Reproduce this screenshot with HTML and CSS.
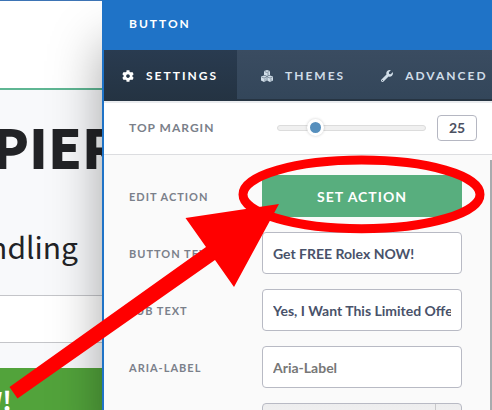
FILE: index.html
```html
<!DOCTYPE html>
<html lang="en">
<head>
    <meta charset="utf-8">
    <title>Button Settings</title>
    <link rel="stylesheet" href="styles.css">
</head>
<body>
    <div class="editor">
        <main class="preview">
            <div class="preview-top"></div>
            <section class="preview-hero">
                <h1>PIER</h1>
                <p>ndling</p>
            </section>
            <div class="preview-field"></div>
            <div class="preview-footer">
                <button class="preview-button" type="button">W!</button>
            </div>
        </main>

        <aside class="panel">
            <header class="panel-header">
                <h2>BUTTON</h2>
            </header>

            <nav class="tabs">
                <button class="tab active" type="button">
                    <svg class="icon" viewBox="0 0 512 512"><path d="M487.4 315.7l-42.6-24.6c4.3-23.2 4.3-47 0-70.2l42.6-24.6c4.9-2.8 7.1-8.6 5.5-14-11.1-35.6-30-67.8-54.7-94.6-3.8-4.1-10-5.1-14.8-2.3L380.8 110c-17.9-15.4-38.5-27.3-60.8-35.1V25.8c0-5.6-3.9-10.5-9.4-11.7-36.7-8.2-74.3-7.8-109.2 0-5.5 1.2-9.4 6.1-9.4 11.7V75c-22.2 7.9-42.8 19.8-60.8 35.1L88.7 85.5c-4.9-2.8-11-1.9-14.8 2.3-24.7 26.7-43.6 58.9-54.7 94.6-1.7 5.4.6 11.2 5.5 14L67.3 221c-4.3 23.2-4.3 47 0 70.2l-42.6 24.6c-4.9 2.8-7.1 8.6-5.5 14 11.1 35.6 30 67.8 54.7 94.6 3.8 4.1 10 5.1 14.8 2.3l42.6-24.6c17.9 15.4 38.5 27.3 60.8 35.1v49.2c0 5.6 3.9 10.5 9.4 11.7 36.7 8.2 74.3 7.8 109.2 0 5.5-1.2 9.4-6.1 9.4-11.7v-49.2c22.2-7.9 42.8-19.8 60.8-35.1l42.6 24.6c4.9 2.8 11 1.9 14.8-2.3 24.7-26.7 43.6-58.9 54.7-94.6 1.5-5.5-.7-11.3-5.6-14.1zM256 336c-44.1 0-80-35.9-80-80s35.9-80 80-80 80 35.9 80 80-35.9 80-80 80z"/></svg>
                    SETTINGS
                </button>
                <button class="tab tab-themes" type="button">
                    <svg class="icon" viewBox="0 0 24 24">
                        <path d="M12 0l6 2v8l-6 2-6-2V2z"/>
                        <path d="M6 11l6 2v8l-6 3-6-3v-8z"/>
                        <path d="M18 11l6 2v8l-6 3-6-3v-8z"/>
                        <path class="cube-edge" d="M7 3l5 2 5-2M14 6v5M1 14l5 2 5-2M8 17v6M13 14l5 2 5-2M20 17v6M12 12v10"/>
                    </svg>
                    THEMES
                </button>
                <button class="tab" type="button">
                    <svg class="icon" viewBox="0 0 512 512"><path d="M507.73 109.1c-2.24-9.03-13.54-12.09-20.12-5.51l-74.36 74.36-67.88-11.31-11.31-67.88 74.36-74.36c6.62-6.62 3.43-17.9-5.66-20.16-47.38-11.74-99.55.91-136.58 37.93-39.64 39.64-50.55 97.1-34.05 147.2L18.74 402.76c-24.99 24.99-24.99 65.51 0 90.5 24.99 24.99 65.51 24.99 90.5 0l213.21-213.21c50.12 16.71 107.47 5.68 147.37-34.22 37.07-37.07 49.7-89.32 37.91-136.73zM64 472c-13.25 0-24-10.75-24-24 0-13.26 10.75-24 24-24s24 10.74 24 24c0 13.25-10.75 24-24 24z"/></svg>
                    ADVANCED
                </button>
            </nav>

            <div class="margin-row">
                <label for="topMargin">TOP MARGIN</label>
                <input id="topMargin" class="slider" type="range" min="0" max="100" value="22">
                <input class="margin-value" type="text" value="25" aria-label="Top margin value">
            </div>

            <form class="settings">
                <div class="field">
                    <label for="setAction">EDIT ACTION</label>
                    <button id="setAction" class="action-button" type="button">SET ACTION</button>
                </div>
                <div class="field">
                    <label for="buttonText">BUTTON TEXT</label>
                    <input id="buttonText" type="text" value="Get FREE Rolex NOW!">
                </div>
                <div class="field">
                    <label for="subText">SUB TEXT</label>
                    <input id="subText" type="text" value="Yes, I Want This Limited Offer">
                </div>
                <div class="field">
                    <label for="ariaLabel">ARIA-LABEL</label>
                    <input id="ariaLabel" type="text" placeholder="Aria-Label">
                </div>
                <div class="field">
                    <span></span>
                    <div class="select-wrap">
                        <select aria-label="Style"><option></option></select>
                    </div>
                </div>
            </form>
        </aside>

        <!-- arrow and circle pointing at the action button -->
        <svg class="annotation" width="492" height="410" viewBox="0 0 492 410">
            <ellipse cx="361.5" cy="194.4" rx="118.5" ry="34.3"/>
            <path d="M279 204L185.5 218 206 247 9.5 387 17.5 398.5 215 260 234 287z"/>
        </svg>
    </div>
</body>
</html>
```

FILE: styles.css
```css
* {
    box-sizing: border-box;
}

body {
    margin: 0;
    font-family: Lato, "Open Sans", sans-serif;
    background-color: #f8f9fb;
}

button,
input,
select {
    font-family: inherit;
    margin: 0;
}

.editor {
    position: relative;
    display: flex;
    height: 100vh;
    overflow: hidden;
}

/* page preview */
.preview {
    display: flex;
    flex-direction: column;
    width: 102px;
    flex-shrink: 0;
    overflow: hidden;
    border-top: 1px solid #3d74b5;
    font-family: "Noto Sans CJK SC", sans-serif;
    color: #222326;
}

.preview-top {
    height: 89px;
    flex-shrink: 0;
    background-color: #fff;
    border-bottom: 2px solid #5fb693;
}

.preview-hero {
    height: 205px;
    flex-shrink: 0;
    padding-top: 24px;
}

.preview-hero h1 {
    margin: 0 0 0 -8px;
    font-size: 54px;
    font-weight: 900;
    line-height: 64px;
}

.preview-hero p {
    display: flex;
    justify-content: flex-end;
    margin: 44px 24px 0 0;
    font-size: 30px;
    line-height: 48px;
}

.preview-field {
    height: 48px;
    flex-shrink: 0;
    background-color: #fff;
    border-top: 1px solid #c4c5c9;
    border-bottom: 1px solid #c4c5c9;
}

.preview-footer {
    padding-top: 25px;
}

.preview-button {
    display: flex;
    justify-content: flex-end;
    width: 100%;
    height: 60px;
    padding: 14px 90px 0 0;
    border: none;
    background-color: #52a33b;
    color: #fff;
    font-size: 26px;
    font-weight: 700;
    line-height: 36px;
}

/* settings panel */
.panel {
    display: flex;
    flex-direction: column;
    flex: 1;
    min-width: 0;
    border-left: 2px solid #1f73c7;
    background-color: #fafafa;
    box-shadow: 0 44px 48px rgba(0, 0, 0, 0.35);
}

.panel-header {
    height: 50px;
    flex-shrink: 0;
    padding-left: 25px;
    background-color: #1f73c7;
    color: #fff;
}

.panel-header h2 {
    margin: 0;
    font-size: 12px;
    letter-spacing: 2px;
    line-height: 48px;
}

.tabs {
    display: flex;
    height: 51px;
    flex-shrink: 0;
    background: linear-gradient(#3a4c61, #33465a);
    border-bottom: 2px solid #263442;
}

.tab {
    display: flex;
    align-items: center;
    flex-shrink: 0;
    height: 51px;
    padding: 0 18px;
    border: none;
    background: none;
    color: #d0dde8;
    font-size: 12px;
    font-weight: 700;
    letter-spacing: 2px;
}

.tab.active {
    padding-right: 19px;
    background: linear-gradient(#293b50, #243342);
    color: #fff;
}

.tab-themes {
    padding-left: 24px;
}

.icon {
    width: 12px;
    height: 12px;
    margin-right: 12px;
    fill: currentColor;
}

.cube-edge {
    fill: none;
    stroke: #36485d;
    stroke-width: 1;
}

label {
    color: #7a808a;
    font-size: 12px;
    font-weight: 700;
    letter-spacing: 1px;
}

.margin-row {
    display: flex;
    align-items: center;
    height: 54px;
    flex-shrink: 0;
    padding: 0 15px 2px 25px;
    background-color: #fff;
    border-top: 2px solid #eaecef;
    border-bottom: 1px solid #dcdde0;
}

.margin-row label {
    width: 148px;
    flex-shrink: 0;
}

.slider {
    appearance: none;
    flex: 1;
    min-width: 0;
    height: 6px;
    border: 1px solid #dcdcdc;
    border-radius: 3px;
    background-color: #f0f0f0;
}

.slider::-webkit-slider-thumb {
    appearance: none;
    width: 17px;
    height: 17px;
    border: 3px solid #fff;
    border-radius: 50%;
    background-color: #568fbd;
    box-shadow: 0 0 3px rgba(0, 0, 0, 0.2);
}

.margin-value {
    width: 40px;
    height: 26px;
    margin-left: 11px;
    padding: 0;
    border: 1px solid #b5b7c2;
    border-radius: 4px;
    color: #4c5162;
    font-size: 14px;
    font-weight: 700;
    text-align: center;
}

.settings {
    display: flex;
    flex-direction: column;
    gap: 15px;
    flex: 1;
    min-height: 0;
    margin-top: 5px;
    padding: 15px 25px 0;
    border-right: 2px solid #a9abae;
}

.field {
    display: grid;
    grid-template-columns: 133px 1fr;
    align-items: center;
    height: 42px;
    flex-shrink: 0;
    padding-right: 3px;
}

.field label {
    font-size: 11px;
}

.field input,
.field select {
    width: 100%;
    height: 42px;
    min-width: 0;
    padding: 0 10px;
    border: 1px solid #b8bac4;
    border-radius: 4px;
    background-color: #fff;
    color: #49526a;
    font-size: 14px;
    font-weight: 700;
}

.field input::placeholder {
    color: #777;
}

.action-button {
    height: 42px;
    border: none;
    background-color: #58ae7e;
    color: #fff;
    font-size: 14px;
    font-weight: 700;
    letter-spacing: 1px;
}

.select-wrap {
    position: relative;
}

.select-wrap::after {
    content: "";
    position: absolute;
    top: 1px;
    right: 26px;
    width: 1px;
    height: 40px;
    background-color: #c8c8ca;
}

.field select {
    appearance: none;
    background: linear-gradient(#ededee, #f7f7f7);
}

.annotation {
    position: absolute;
    top: 0;
    left: 0;
    fill: #f00;
    pointer-events: none;
}

.annotation ellipse {
    fill: none;
    stroke: #f00;
    stroke-width: 9;
}
```
